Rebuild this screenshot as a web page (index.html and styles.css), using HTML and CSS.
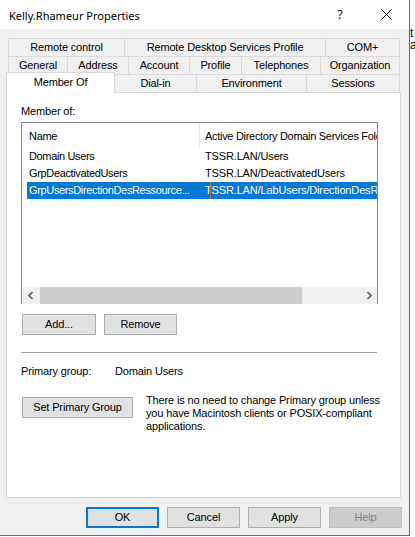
FILE: index.html
```html
<!DOCTYPE html>
<html>
<head>
<meta charset="utf-8">
<title>Kelly.Rhameur Properties</title>
<link rel="stylesheet" href="styles.css">
</head>
<body>
<div class="window">
  <div class="titlebar">
    <span class="title">Kelly.Rhameur Properties</span>
    <span class="cap-btn cap-help">?</span>
    <span class="cap-btn cap-close">
      <svg width="11" height="11" viewBox="0 0 11 11"><path d="M0.5 0.5 L10.5 10.5 M10.5 0.5 L0.5 10.5" stroke="#000" stroke-width="1" fill="none"/></svg>
    </span>
  </div>
  <div class="client">
    <div class="tabs">
      <div class="tabrow">
        <div class="tab w117">Remote control</div>
        <div class="tab w202">Remote Desktop Services Profile</div>
        <div class="tab w75">COM+</div>
      </div>
      <div class="tabrow">
        <div class="tab w60">General</div>
        <div class="tab w62">Address</div>
        <div class="tab w62">Account</div>
        <div class="tab w53">Profile</div>
        <div class="tab w80">Telephones</div>
        <div class="tab w80">Organization</div>
      </div>
      <div class="tabrow">
        <div class="tab tab-sel">Member Of</div>
        <div class="tab w83">Dial-in</div>
        <div class="tab w111">Environment</div>
        <div class="tab w94">Sessions</div>
      </div>
    </div>
    <div class="panel">
      <div class="label">Member of:</div>
      <div class="listview">
        <div class="lv-header">
          <div class="h1">Name</div>
          <div class="h2">Active Directory Domain Services Folder</div>
        </div>
        <div class="lv-body">
          <div class="row"><div class="c1">Domain Users</div><div class="c2">TSSR.LAN/Users</div></div>
          <div class="row"><div class="c1">GrpDeactivatedUsers</div><div class="c2">TSSR.LAN/DeactivatedUsers</div></div>
          <div class="row row-sel"><div class="c1">GrpUsersDirectionDesRessource...</div><div class="c2">TSSR.LAN/LabUsers/DirectionDesRessourcesHumaines<span class="ibeam"></span></div></div>
        </div>
        <div class="hscroll">
          <div class="sb-btn"><svg width="8" height="9" viewBox="0 0 8 9"><path d="M5.5 1 L2 4.5 L5.5 8" stroke="#606060" stroke-width="1.7" fill="none"/></svg></div>
          <div class="sb-track"><div class="sb-thumb"></div></div>
          <div class="sb-btn"><svg width="8" height="9" viewBox="0 0 8 9"><path d="M2.5 1 L6 4.5 L2.5 8" stroke="#606060" stroke-width="1.7" fill="none"/></svg></div>
        </div>
      </div>
      <div class="btnrow">
        <button class="btn w-add">Add...</button>
        <button class="btn w-rem">Remove</button>
      </div>
      <div class="sep"></div>
      <div class="primary"><span class="pg-label">Primary group:</span><span>Domain Users</span></div>
      <div class="setrow">
        <button class="btn w-set">Set Primary Group</button>
        <p class="note">There is no need to change Primary group unless<br>you have Macintosh clients or POSIX-compliant<br>applications.</p>
      </div>
    </div>
    <div class="dlgbtns">
      <button class="btn dbtn btn-default">OK</button>
      <button class="btn dbtn">Cancel</button>
      <button class="btn dbtn">Apply</button>
      <button class="btn dbtn btn-disabled">Help</button>
    </div>
  </div>
</div>
<div class="behind">
  <div class="bl1">t</div>
  <div class="bl2">ar</div>
</div>
</body>
</html>
```
FILE: styles.css
```css
html, body {
  margin: 0;
  padding: 0;
}
body {
  background: #fff;
  display: flex;
  height: 537px;
  overflow: hidden;
  font-family: "Liberation Sans", Arial, sans-serif;
  font-size: 11px;
  letter-spacing: -0.15px;
  color: #000;
}
.window {
  flex: none;
  width: 410px;
  height: 536px;
  box-sizing: border-box;
  border-right: 1px solid #6a6a6a;
  border-bottom: 1px solid #6a6a6a;
  display: flex;
  flex-direction: column;
}
.titlebar {
  flex: none;
  height: 29px;
  background: #fff;
  display: flex;
  align-items: center;
}
.title {
  font-family: "Noto Sans", "Open Sans", sans-serif;
  font-size: 11px;
  letter-spacing: 0;
  margin-left: 9px;
  margin-top: 1px;
}
.cap-btn {
  width: 46px;
  height: 29px;
  display: flex;
  align-items: center;
  justify-content: center;
}
.cap-help {
  margin-left: auto;
  font-family: "Noto Sans", sans-serif;
  font-size: 12px;
}
.cap-close svg { display: block; }
.client {
  flex: 1;
  background: #f0f0f0;
  display: flex;
  flex-direction: column;
}
.tabs {
  margin: 9px 0 0 8px;
  width: 392px;
}
.tabrow {
  display: flex;
  align-items: flex-start;
  height: 18px;
}
.tab {
  box-sizing: border-box;
  height: 18px;
  border: 1px solid #d9d9d9;
  border-bottom: none;
  margin-left: -1px;
  text-align: center;
  line-height: 17px;
  white-space: nowrap;
  background: #f0f0f0;
}
.tab:first-child { margin-left: 0; }
.w117 { width: 117px; }
.w202 { width: 202px; }
.w75 { width: 75px; }
.w60 { width: 60px; }
.w62 { width: 62px; }
.w53 { width: 53px; }
.w80 { width: 80px; }
.w83 { width: 83px; }
.w111 { width: 111px; }
.w94 { width: 94px; }
.tab.tab-sel {
  position: relative;
  z-index: 2;
  width: 109px;
  height: 21px;
  margin-left: -2px;
  margin-top: -2px;
  background: #fff;
  line-height: 18px;
}
.panel {
  margin-left: 6px;
  width: 395px;
  height: 406px;
  box-sizing: border-box;
  border: 1px solid #d9d9d9;
  background: #fff;
  padding-top: 12px;
}
.label {
  margin-left: 14px;
  line-height: 13px;
}
.listview {
  margin: 4px 0 0 14px;
  width: 357px;
  height: 182px;
  box-sizing: border-box;
  border: 1px solid #828790;
  border-bottom: none;
  display: flex;
  flex-direction: column;
  overflow: hidden;
}
.lv-header {
  flex: none;
  height: 24px;
  display: flex;
  white-space: nowrap;
  letter-spacing: -0.3px;
}
.h1 {
  box-sizing: border-box;
  width: 178px;
  padding: 3px 0 0 7px;
  line-height: 21px;
  border-right: 1px solid #e5e5e5;
}
.h2 {
  flex: 1;
  padding: 3px 0 0 5px;
  line-height: 21px;
  overflow: hidden;
}
.lv-body {
  flex: 1;
  padding-top: 1px;
  letter-spacing: -0.35px;
}
.row {
  display: flex;
  height: 17px;
  line-height: 17px;
  margin-left: 5px;
  white-space: nowrap;
}
.c1 {
  box-sizing: border-box;
  width: 172px;
  flex: none;
  padding-left: 2px;
  overflow: hidden;
}
.c2 {
  position: relative;
  flex: 1;
  padding-left: 6px;
  overflow: hidden;
  letter-spacing: -0.15px;
}
.row-sel {
  background: #0078d7;
  color: #fff;
}
.ibeam {
  position: absolute;
  left: 11px;
  top: 0;
  width: 1px;
  height: 17px;
  background: #c8702a;
}
.hscroll {
  flex: none;
  height: 17px;
  display: flex;
  background: #f0f0f0;
}
.sb-btn {
  width: 17px;
  flex: none;
  display: flex;
  align-items: center;
  justify-content: center;
}
.sb-btn svg { display: block; }
.sb-track {
  flex: 1;
  padding-left: 1px;
}
.sb-thumb {
  width: 262px;
  height: 17px;
  background: #cdcdcd;
}
.btn {
  box-sizing: border-box;
  height: 21px;
  margin: 0;
  padding: 0;
  border: 1px solid #adadad;
  background: #e1e1e1;
  font-family: "Liberation Sans", Arial, sans-serif;
  font-size: 11px;
  letter-spacing: -0.15px;
  color: #000;
  line-height: 19px;
  text-align: center;
}
.btnrow {
  margin: 10px 0 0 15px;
  display: flex;
  gap: 8px;
}
.w-add { width: 74px; }
.w-rem { width: 73px; }
.sep {
  margin: 17px 0 0 14px;
  width: 356px;
  height: 1px;
  background: #a0a0a0;
}
.primary {
  margin: 12px 0 0 14px;
  line-height: 13px;
  display: flex;
}
.pg-label {
  width: 94px;
}
.setrow {
  margin: 19px 0 0 15px;
  display: flex;
  align-items: flex-start;
}
.w-set {
  width: 111px;
  flex: none;
}
.note {
  margin: -3px 0 0 13px;
  line-height: 13px;
  white-space: nowrap;
}
.dlgbtns {
  margin-top: 9px;
  display: flex;
  justify-content: flex-end;
  gap: 8px;
  padding-right: 7px;
}
.dbtn { width: 73px; }
.btn-default {
  border: 2px solid #0078d7;
  line-height: 17px;
}
.btn-disabled {
  background: #cccccc;
  border-color: #bfbfbf;
  color: #838383;
}
.behind {
  flex: 1;
  overflow: hidden;
  font-size: 12px;
  line-height: 11px;
  white-space: nowrap;
}
.bl1 { margin-top: 28px; }
.bl2 { margin-top: 1px; }
```
